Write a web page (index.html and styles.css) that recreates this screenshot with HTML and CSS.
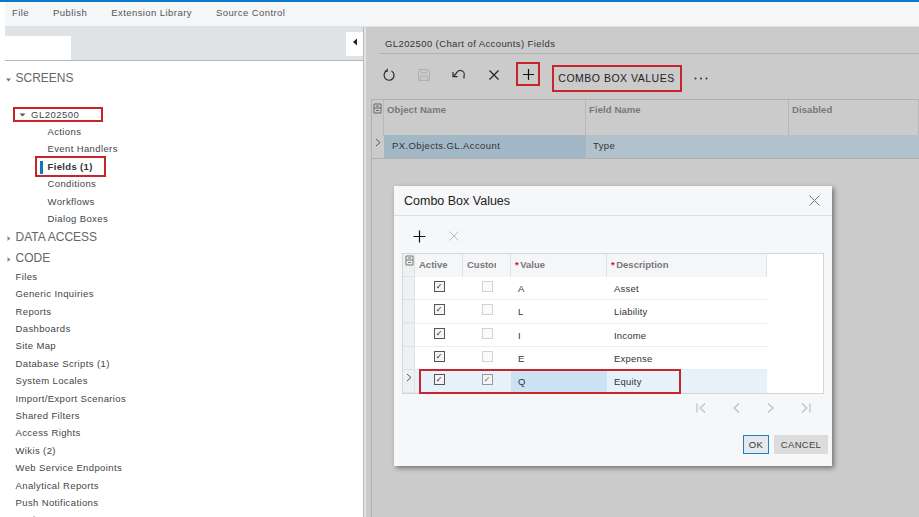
FILE: index.html
```html
<!DOCTYPE html>
<html lang="en">
<head>
<meta charset="utf-8">
<title>Combo Box Values</title>
<link rel="stylesheet" href="styles.css">
</head>
<body>
<div class="app">
  <nav class="menubar">
    <span>File</span><span>Publish</span><span>Extension Library</span><span>Source Control</span>
  </nav>
  <div class="body">
    <aside class="side">
      <div class="side-head">
        <div class="side-tab"></div>
        <button class="collapse"><svg width="6" height="8" viewBox="0 0 6 8"><path d="M5 0.500V7.500L1 4z" fill="#222"/></svg></button>
      </div>
      <div class="tree">
        <div class="sec sec-first"><svg class="caret" width="7" height="7" viewBox="0 0 7 7"><path d="M1 2.500H6L3.500 5.500z" fill="#777"/></svg>SCREENS</div>
        <div class="screen"><svg class="caret2" width="7" height="7" viewBox="0 0 7 7"><path d="M0.500 2.500H6.500L3.500 5.500z" fill="#555"/></svg>GL202500</div>
        <div class="sub">Actions</div>
        <div class="sub">Event Handlers</div>
        <div class="sub sub-active"><i class="mark"></i><b>Fields (1)</b></div>
        <div class="sub">Conditions</div>
        <div class="sub">Workflows</div>
        <div class="sub">Dialog Boxes</div>
        <div class="sec sec-data"><svg class="caret" width="7" height="7" viewBox="0 0 7 7"><path d="M2.500 1V6L5.500 3.500z" fill="#888"/></svg>DATA ACCESS</div>
        <div class="sec sec-code"><svg class="caret" width="7" height="7" viewBox="0 0 7 7"><path d="M2.500 1V6L5.500 3.500z" fill="#888"/></svg>CODE</div>
        <div class="item">Files</div>
        <div class="item">Generic Inquiries</div>
        <div class="item">Reports</div>
        <div class="item">Dashboards</div>
        <div class="item">Site Map</div>
        <div class="item">Database Scripts (1)</div>
        <div class="item">System Locales</div>
        <div class="item">Import/Export Scenarios</div>
        <div class="item">Shared Filters</div>
        <div class="item">Access Rights</div>
        <div class="item">Wikis (2)</div>
        <div class="item">Web Service Endpoints</div>
        <div class="item">Analytical Reports</div>
        <div class="item">Push Notifications</div>
        <div class="item">Business Events</div>
      </div>
    </aside>
    <main class="main">
      <div class="title">GL202500 (Chart of Accounts) Fields</div>
      <div class="toolbar">
        <button class="tool"><svg width="14" height="14" viewBox="0 0 14 14" fill="none" stroke="#2a2a2a" stroke-width="1.200"><path d="M4.800 2.800A5 5 0 1 0 9.500 2.900"/><path d="M5.200 0.800V3.200H2.800"/></svg></button>
        <button class="tool"><svg width="14" height="14" viewBox="0 0 14 14" fill="none" stroke="#b0b0b0" stroke-width="1"><path d="M1.500 1.500H10.500L12.500 3.500V12.500H1.500z"/><path d="M4 1.500V5H10V1.500M3.500 12.500V8H10.500V12.500"/></svg></button>
        <button class="tool"><svg width="16" height="14" viewBox="0 0 16 14" fill="none" stroke="#2a2a2a" stroke-width="1.200"><path d="M13 10.500V8A4 4 0 0 0 5.500 5L2.500 8.500"/><path d="M2 4V8.700H6.500"/></svg></button>
        <button class="tool"><svg width="12" height="12" viewBox="0 0 12 12" stroke="#222" stroke-width="1.200"><path d="M1.500 1.500L10.500 10.500M10.500 1.500L1.500 10.500"/></svg></button>
        <button class="tool-add"><svg width="13" height="13" viewBox="0 0 13 13" stroke="#111" stroke-width="1.200"><path d="M6.500 1V12M1 6.500H12"/></svg></button>
        <button class="combo">COMBO BOX VALUES</button>
        <svg class="more" width="14" height="3" viewBox="0 0 14 3" fill="#333"><circle cx="1.500" cy="1.500" r="1"/><circle cx="7" cy="1.500" r="1"/><circle cx="12.500" cy="1.500" r="1"/></svg>
      </div>
      <div class="grid">
        <div class="grid-head">
          <div class="cell sel"><svg width="9" height="11" viewBox="0 0 9 11" fill="none" stroke="#666"><path d="M1 1H8V10H1zM1 5H8M3 7.500H6M3 3H6"/></svg></div>
          <div class="cell">Object Name</div>
          <div class="cell">Field Name</div>
          <div class="cell">Disabled</div>
        </div>
        <div class="grid-row">
          <div class="cell sel"><svg width="6" height="9" viewBox="0 0 6 9" fill="none" stroke="#555"><path d="M1 1L5 4.500L1 8"/></svg></div>
          <div class="cell cell-cur">PX.Objects.GL.Account</div>
          <div class="cell">Type</div>
          <div class="cell"></div>
        </div>
      </div>
    </main>
  </div>
  <section class="dialog">
    <header class="dlg-head">
      <span>Combo Box Values</span>
      <svg width="11" height="11" viewBox="0 0 11 11" stroke="#777" stroke-width="1"><path d="M0.500 0.500L10.500 10.500M10.500 0.500L0.500 10.500"/></svg>
    </header>
    <div class="dlg-tools">
      <svg width="13" height="13" viewBox="0 0 13 13" stroke="#111" stroke-width="1.200"><path d="M6.500 0.500V12.500M0.500 6.500H12.500"/></svg>
      <svg width="10" height="10" viewBox="0 0 10 10" stroke="#bbb" stroke-width="1"><path d="M0.500 0.500L9.500 9.500M9.500 0.500L0.500 9.500"/></svg>
    </div>
    <div class="dgrid">
      <div class="drow dhead">
        <div class="dc dsel"><svg width="9" height="11" viewBox="0 0 9 11" fill="none" stroke="#777"><path d="M1 1H8V10H1zM1 5H8M3 7.500H6M3 3H6"/></svg></div>
        <div class="dc">Active</div>
        <div class="dc"><span class="dclip">Custom</span></div>
        <div class="dc"><em>*</em>Value</div>
        <div class="dc"><em>*</em>Description</div>
      </div>
      <div class="drow">
        <div class="dc dsel"></div><div class="dc dcheck"><span class="cb on">✓</span></div><div class="dc dcheck"><span class="cb"></span></div><div class="dc dval">A</div><div class="dc dval">Asset</div>
      </div>
      <div class="drow">
        <div class="dc dsel"></div><div class="dc dcheck"><span class="cb on">✓</span></div><div class="dc dcheck"><span class="cb"></span></div><div class="dc dval">L</div><div class="dc dval">Liability</div>
      </div>
      <div class="drow">
        <div class="dc dsel"></div><div class="dc dcheck"><span class="cb on">✓</span></div><div class="dc dcheck"><span class="cb"></span></div><div class="dc dval">I</div><div class="dc dval">Income</div>
      </div>
      <div class="drow">
        <div class="dc dsel"></div><div class="dc dcheck"><span class="cb on">✓</span></div><div class="dc dcheck"><span class="cb"></span></div><div class="dc dval">E</div><div class="dc dval">Expense</div>
      </div>
      <div class="drow dcur">
        <div class="dc dsel"><svg width="6" height="9" viewBox="0 0 6 9" fill="none" stroke="#555"><path d="M1 1L5 4.500L1 8"/></svg></div><div class="dc dcheck"><span class="cb on">✓</span></div><div class="dc dcheck"><span class="cb on dim">✓</span></div><div class="dc dval dfocus">Q</div><div class="dc dval">Equity</div>
        <div class="redbox"></div>
      </div>
    </div>
    <div class="pager">
      <svg width="10" height="10" viewBox="0 0 10 10" fill="none" stroke="#bbb" stroke-width="1.100"><path d="M1 0.500V9.500M9 0.500L4 5L9 9.500"/></svg>
      <svg width="7" height="10" viewBox="0 0 7 10" fill="none" stroke="#bbb" stroke-width="1.100"><path d="M6 0.500L1 5L6 9.500"/></svg>
      <svg width="7" height="10" viewBox="0 0 7 10" fill="none" stroke="#bbb" stroke-width="1.100"><path d="M1 0.500L6 5L1 9.500"/></svg>
      <svg width="10" height="10" viewBox="0 0 10 10" fill="none" stroke="#bbb" stroke-width="1.100"><path d="M1 0.500L6 5L1 9.500M9 0.500V9.500"/></svg>
    </div>
    <div class="dlg-foot">
      <button class="ok">OK</button>
      <button class="cancel">CANCEL</button>
    </div>
  </section>
</div>
</body>
</html>
```
FILE: styles.css
```css
* { box-sizing: border-box; }
html, body { margin: 0; height: 100%; overflow: hidden; background: #fff; }
body { font-family: "Liberation Sans", Arial, sans-serif; font-size: 9.5px; color: #333; }
button { font: inherit; padding: 0; border: 0; background: none; color: inherit; }
.app { position: relative; width: 919px; height: 517px; overflow: hidden; border-top: 2px solid #0a78c4; display: flex; flex-direction: column; }

.menubar { height: 25px; flex: none; margin-left: 5px; padding: 0 0 3px 7px; display: flex; align-items: center; gap: 24px; background: #f5f6f8; color: #555; letter-spacing: 0.430px; border-bottom: 1px solid #dfe1e3; }

.body { flex: 1; display: flex; min-height: 0; margin-left: 5px; }

.side { width: 358px; flex: none; display: flex; flex-direction: column; }
.side-head { height: 34px; flex: none; display: flex; justify-content: space-between; background: #e0e3e6; border-bottom: 1px solid #b5b7b9; }
.side-tab { width: 66px; height: 24px; margin-top: 9px; background: #fff; }
.collapse { width: 17px; height: 24px; margin-top: 5px; background: #fff; display: flex; align-items: center; justify-content: center; padding-bottom: 4px; }

.tree { flex: 1; overflow: hidden; }
.sec { display: flex; align-items: center; font-size: 12px; line-height: 21px; height: 21px; color: #666; padding-left: 10.500px; position: relative; }
.caret { position: absolute; left: 0; top: 8px; }
.sec-first { margin-top: 7px; margin-bottom: 18px; }
.screen { width: 90px; height: 15px; margin-left: 8px; margin-bottom: 1px; border: 2px solid #c8242b; display: flex; align-items: center; padding-left: 4px; gap: 5px; color: #444; letter-spacing: 0.500px; }
.caret2 { flex: none; }
.sub { height: 17.400px; line-height: 17.400px; padding-left: 42.500px; color: #444; letter-spacing: 0.380px; }
.sub-active { width: 71px; height: 21px; line-height: 17px; margin: -2px 0 -1.600px 30px; padding: 0 0 0 10.500px; border: 2px solid #c8242b; position: relative; color: #333; letter-spacing: 0.350px; }
.mark { position: absolute; left: 3px; top: 3px; width: 3px; height: 13px; background: #0a78c4; }
.item { height: 17.400px; line-height: 17.400px; padding-left: 10.500px; color: #444; letter-spacing: 0.380px; }
.sec-code + .item { margin-top: -1.500px; }

.main { flex: 1; min-width: 0; background: #cbcbcb; border-left: 1px solid #b9b9b9; box-shadow: inset 2px 0 0 #e2e3e4; display: flex; flex-direction: column; }
.title { height: 27px; margin-left: 15px; padding: 11px 0 0 6px; line-height: 12px; color: #333; border-bottom: 1px solid #b3b3b3; letter-spacing: 0.400px; }
.toolbar { height: 45px; flex: none; padding-left: 7.500px; display: flex; align-items: center; color: #222; }
.tool { width: 35px; height: 23px; margin-top: -3px; display: flex; align-items: center; justify-content: center; flex: none; }
.tool-add { width: 24px; height: 24px; border: 2px solid #c8242b; margin: -5px 0 0 4.500px; display: flex; align-items: center; justify-content: center; flex: none; }
.combo { width: 130px; height: 27px; margin: 3px 0 0 11.500px; border: 2px solid #c8242b; font-size: 10.500px; letter-spacing: 0.500px; color: #222; text-align: center; flex: none; }
.more { margin: 3px 0 0 12.500px; }

.grid { margin-left: 7px; border-top: 1px solid #b0b0b0; border-left: 1px solid #b0b0b0; flex: 1; }
.grid-head, .grid-row { display: grid; grid-template-columns: 12px 202px 203px 1fr; }
.grid-head { height: 35px; color: #787878; font-weight: bold; }
.grid-head .cell { padding: 4px 0 0 3px; border-right: 1px solid #b8b8b8; line-height: 12px; letter-spacing: 0.100px; }
.grid-head .sel { padding: 3px 0 0 1px; }
.grid-row { height: 24px; background: #b2c2cc; border-bottom: 1px solid #b0b0b0; }
.grid-row .cell { padding-left: 7px; line-height: 22px; color: #333; letter-spacing: 0.400px; }
.grid-row .sel { padding-left: 3px; background: #cbcbcb; line-height: 18px; }
.grid-row .cell-cur { background: #a3b8c6; padding-left: 8px; }

.dialog { position: absolute; left: 394px; top: 184px; width: 438px; height: 280px; background: #f5f7f9; box-shadow: 2px 2px 5px rgba(0,0,0,.45); display: flex; flex-direction: column; }
.dlg-head { height: 30px; flex: none; display: flex; align-items: center; justify-content: space-between; padding: 0 12px 0 10px; font-size: 12.500px; color: #222; border-bottom: 1px solid #dcdedf; }
.dlg-tools { height: 37px; flex: none; padding: 3px 0 0 19px; display: flex; align-items: center; gap: 23px; }
.dgrid { margin-left: 8px; width: 422px; height: 141px; flex: none; background: #fff; border: 1px solid #d4d6d8; }
.drow { position: relative; display: grid; grid-template-columns: 12px 48px 48px 96px 160px; width: 364px; height: 23.300px; border-bottom: 1px solid #e4eef5; }
.dhead { background: #f5f6f8; height: 23px; border-bottom: 0; color: #787878; font-weight: bold; }
.dc { min-width: 0; }
.dhead .dc { padding-left: 4px; line-height: 21px; border-right: 1px solid #dfe1e3; }
.dhead .dsel { padding: 1px 0 0 2px; line-height: 10px; }
.dclip { display: block; width: 29px; overflow: hidden; white-space: nowrap; }
em { color: #c8102e; font-style: normal; margin-right: 1.500px; }
.dsel { background: #eff0f2; border-right: 1px solid #e0e2e4; border-bottom: 1px solid #e0e2e4; }
.dcheck { display: flex; justify-content: center; padding-top: 4px; }
.cb { width: 11px; height: 11px; border: 1px solid #d2d2d2; background: #fbfbfb; display: block; font: bold 8px/9px "DejaVu Sans", sans-serif; text-align: center; color: #222; }
.cb.on { border-color: #555; background: #f4f4f4; }
.cb.dim { border-color: #999; color: #666; }
.dval { padding-left: 7px; line-height: 23px; color: #333; letter-spacing: 0.200px; }
.dcur { background: #e6f1fa; border-bottom: 0; }
.dcur .dsel { padding: 3px 0 0 3px; line-height: 10px; }
.dfocus { background: #cbe1f4; }
.redbox { position: absolute; left: 16px; top: -1px; width: 262px; height: 25px; border: 2px solid #c8242b; pointer-events: none; }
.pager { height: 28px; flex: none; display: flex; align-items: center; gap: 27px; padding-left: 302px; }
.dlg-foot { margin-top: 13px; display: flex; gap: 5px; padding-left: 349px; }
.ok { width: 26px; height: 19px; background: #e4e9ee; border: 1px solid #1f7fc0; color: #333; letter-spacing: 0.300px; }
.cancel { width: 54px; height: 19px; background: #dcdcdc; color: #444; letter-spacing: 0.300px; }
```
